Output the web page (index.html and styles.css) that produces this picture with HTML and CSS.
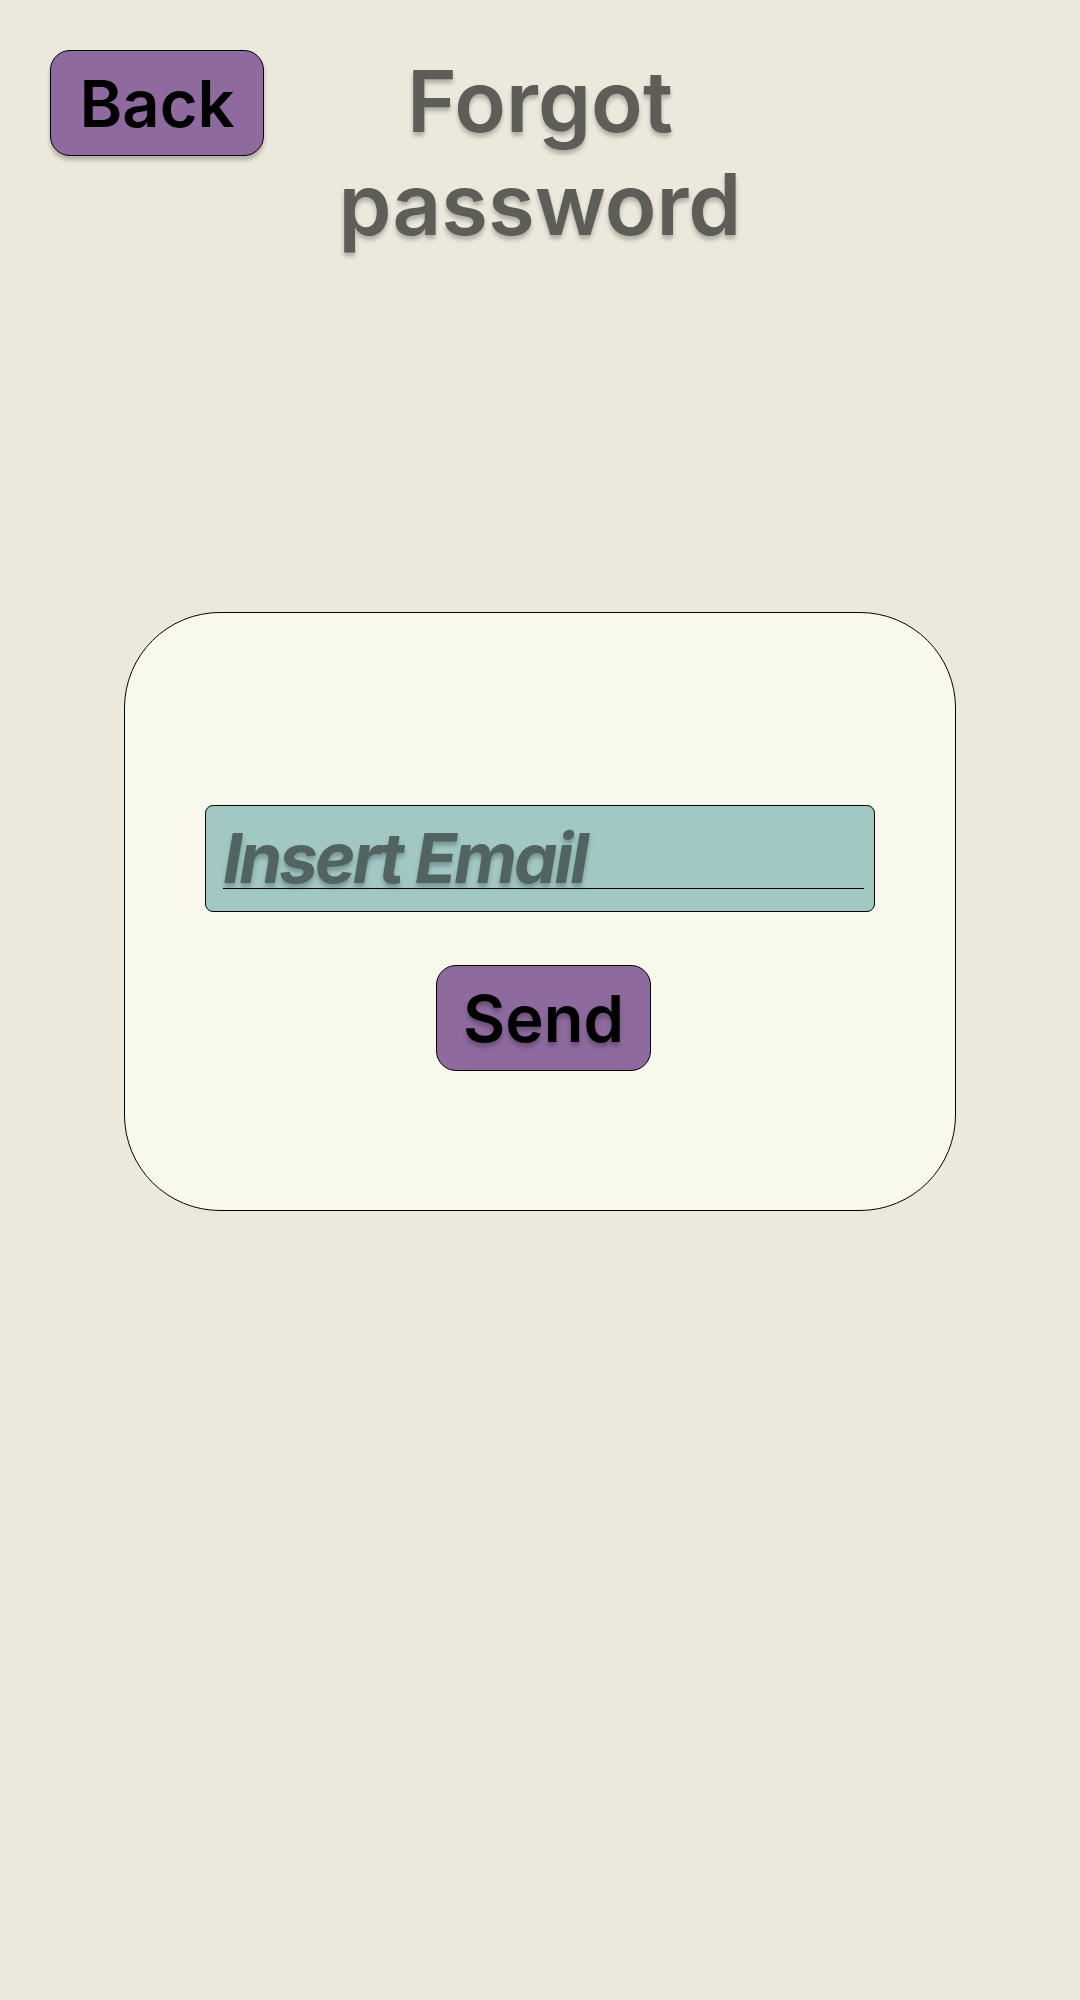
FILE: index.html
```html
<!DOCTYPE html>
<html lang="en">
<head>
<meta charset="utf-8">
<title>Forgot password</title>
<link rel="stylesheet" href="styles.css">
</head>
<body>
<div class="page">
  <header class="header">
    <div class="header-left">
      <button class="btn btn-back" type="button">Back</button>
    </div>
    <h1 class="title">Forgot<br>password</h1>
    <div class="header-right"></div>
  </header>
  <main class="card">
    <div class="field">
      <div class="field-input">Insert Email</div>
    </div>
    <button class="btn btn-send" type="button">Send</button>
  </main>
</div>
</body>
</html>
```

FILE: styles.css
```css
* { box-sizing: border-box; }

html, body {
  margin: 0;
  padding: 0;
}

body {
  background: #ece9dc;
  font-family: Inter, "Noto Sans", "Liberation Sans", sans-serif;
  width: 1080px;
  min-height: 2000px;
}

.page {
  display: flex;
  flex-direction: column;
  align-items: center;
}

.header {
  width: 100%;
  display: grid;
  grid-template-columns: 1fr auto 1fr;
  padding: 50px 50px 0 50px;
  align-items: start;
}

.header-left {
  display: flex;
  justify-content: flex-start;
}

.btn {
  display: flex;
  align-items: center;
  justify-content: center;
  width: 214px;
  height: 106px;
  padding: 0;
  background: #8e6a9f;
  border: 1px solid #000;
  border-radius: 20px;
  font-family: Inter, "Noto Sans", "Liberation Sans", sans-serif;
  font-weight: 600;
  font-size: 65px;
  color: #000;
  cursor: pointer;
}

.btn-back {
  box-shadow: 0 4px 4px rgba(0, 0, 0, 0.25);
}

.btn-send {
  width: 215px;
  margin-top: 53px;
  margin-left: 7px;
  text-shadow: 0 4px 4px rgba(0, 0, 0, 0.25);
}

.title {
  margin: 0;
  text-align: center;
  font-size: 85px;
  font-weight: 600;
  line-height: 103px;
  color: #5f5d57;
  text-shadow: 0 4px 4px rgba(0, 0, 0, 0.25);
}

.card {
  margin-top: 356px;
  width: 832px;
  height: 599px;
  background: #f9f8ec;
  border: 1px solid #000;
  border-radius: 96px;
  display: flex;
  flex-direction: column;
  align-items: center;
  padding: 192px 80px 0 80px;
}

.field {
  width: 670px;
  height: 107px;
  background: #a2c8c4;
  border: 1px solid #000;
  border-radius: 8px;
  padding: 22px 10px 0 17px;
}

.field-input {
  height: 61px;
  line-height: 60px;
  border-bottom: 1px solid #000;
  font-size: 69px;
  font-weight: 700;
  font-style: italic;
  letter-spacing: -3px;
  color: #526462;
  text-shadow: 0 4px 4px rgba(0, 0, 0, 0.25);
  white-space: nowrap;
}
```
